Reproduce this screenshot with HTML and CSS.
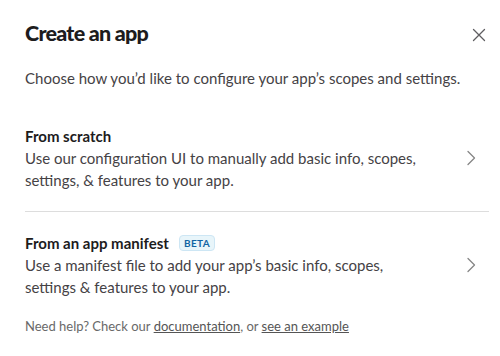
FILE: index.html
```html
<!DOCTYPE html>
<html>
<head>
<meta charset="utf-8">
<link rel="stylesheet" href="styles.css">
</head>
<body>
<div class="modal">
  <div class="header">
    <h1 class="title">Create an app</h1>
    <button class="close" aria-label="Close">
      <svg width="14" height="14" viewBox="0 0 14 14"><path d="M1.5 1.5 L12.5 12.5 M12.5 1.5 L1.5 12.5" stroke="#5e5d60" stroke-width="1.3" fill="none" stroke-linecap="round"/></svg>
    </button>
  </div>
  <p class="subtitle">Choose how you’d like to configure your app’s scopes and settings.</p>
  <div class="options">
    <div class="option">
      <div class="option-text">
        <div class="option-title">From scratch</div>
        <div class="option-desc">Use our configuration UI to manually add basic info, scopes, settings, &amp; features to your app.</div>
      </div>
      <svg class="chevron" width="10" height="16" viewBox="0 0 10 16"><path d="M2 1.5 L8.5 8 L2 14.5" stroke="#868686" stroke-width="1.3" fill="none" stroke-linecap="round" stroke-linejoin="round"/></svg>
    </div>
    <div class="option second">
      <div class="option-text">
        <div class="option-title">From an app manifest <span class="badge">BETA</span></div>
        <div class="option-desc">Use a manifest file to add your app’s basic info, scopes, settings &amp; features to your app.</div>
      </div>
      <svg class="chevron" width="10" height="16" viewBox="0 0 10 16"><path d="M2 1.5 L8.5 8 L2 14.5" stroke="#868686" stroke-width="1.3" fill="none" stroke-linecap="round" stroke-linejoin="round"/></svg>
    </div>
  </div>
  <p class="footer">Need help? Check our <a href="#">documentation</a>, or <a href="#">see an example</a></p>
</div>
</body>
</html>
```

FILE: styles.css
```css
* { box-sizing: border-box; }
html, body { margin: 0; padding: 0; background: #ffffff; }
body {
  font-family: Lato, "Noto Sans", sans-serif;
  color: #1d1c1d;
  width: 500px;
  height: 356px;
  overflow: hidden;
}
.modal {
  padding: 0 11px 0 25px;
}
.header {
  display: flex;
  align-items: center;
  justify-content: space-between;
  padding-top: 19px;
}
.title {
  margin: 0;
  font-size: 21.5px;
  line-height: 28px;
  font-weight: 900;
  letter-spacing: -0.75px;
  color: #1d1c1d;
}
.close {
  border: 0;
  background: none;
  padding: 0;
  margin: 3px 3px 0 0;
  width: 14px;
  height: 14px;
  display: flex;
  cursor: pointer;
}
.subtitle {
  margin: 20px 0 0 0;
  font-size: 15px;
  line-height: 22px;
  color: #454245;
}
.options {
  margin-top: 16px;
}
.option {
  display: flex;
  align-items: center;
  padding: 20px 0 20px 0;
  border-bottom: 1px solid #dddddd;
}
.option.second {
  border-bottom: 0;
  padding-bottom: 0;
}
.option-text {
  flex: 1;
  padding-right: 40px;
}
.option-title {
  font-size: 15px;
  line-height: 22px;
  font-weight: 700;
  color: #1d1c1d;
  display: flex;
  align-items: center;
}
.option-desc {
  font-size: 15px;
  line-height: 22px;
  color: #454245;
}
.chevron {
  margin-right: 13px;
  flex: none;
}
.badge {
  margin-left: 10px;
  font-size: 10px;
  line-height: 12px;
  font-weight: 700;
  letter-spacing: 0.4px;
  color: #1264a3;
  background: #e8f5fa;
  border: 1px solid #cde6f4;
  border-radius: 4px;
  padding: 1px 4px;
}
.footer {
  margin: 19px 0 0 0;
  font-size: 13px;
  line-height: 18px;
  color: #696969;
}
.footer a {
  color: #555555;
  text-decoration: underline;
}
```
